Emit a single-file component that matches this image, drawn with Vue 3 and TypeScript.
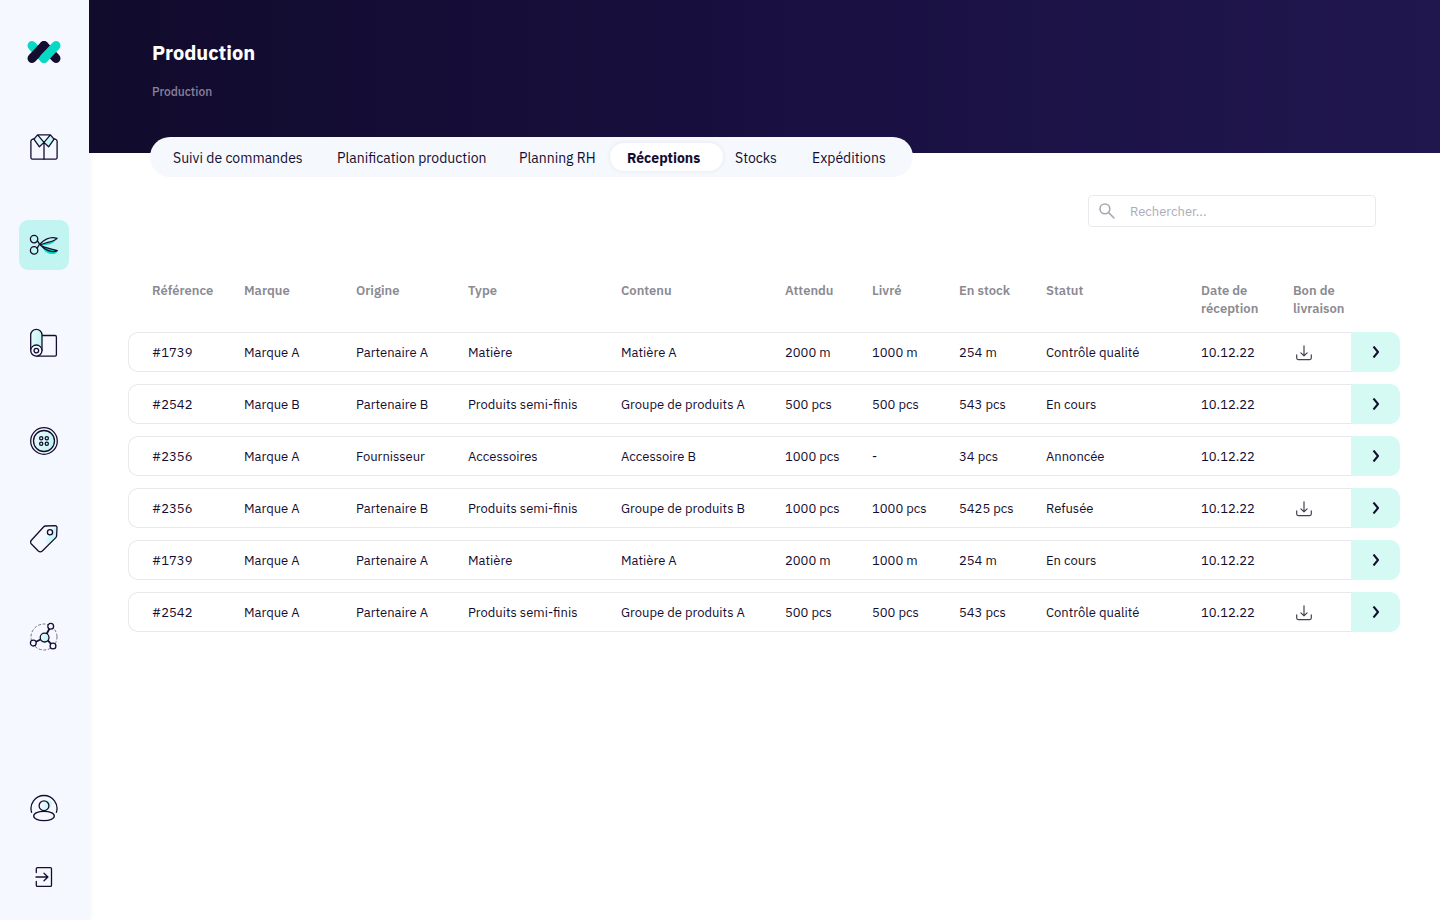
<script setup lang="ts">
import { ref } from 'vue'

interface Reception {
  reference: string
  brand: string
  origin: string
  type: string
  content: string
  expected: string
  delivered: string
  stock: string
  status: string
  date: string
  note: boolean
}

const navItems = [
  { id: 'products', label: 'Produits' },
  { id: 'production', label: 'Production' },
  { id: 'materials', label: 'Matières' },
  { id: 'supplies', label: 'Accessoires' },
  { id: 'labels', label: 'Étiquettes' },
  { id: 'network', label: 'Partenaires' },
]

const tabs = ['Suivi de commandes', 'Planification production', 'Planning RH', 'Réceptions', 'Stocks', 'Expéditions']
const activeTab = ref('Réceptions')
const search = ref('')

const columns = [
  'Référence', 'Marque', 'Origine', 'Type', 'Contenu', 'Attendu',
  'Livré', 'En stock', 'Statut', 'Date de réception', 'Bon de livraison',
]

const rows: Reception[] = [
  { reference: '#1739', brand: 'Marque A', origin: 'Partenaire A', type: 'Matière', content: 'Matière A', expected: '2000 m', delivered: '1000 m', stock: '254 m', status: 'Contrôle qualité', date: '10.12.22', note: true },
  { reference: '#2542', brand: 'Marque B', origin: 'Partenaire B', type: 'Produits semi-finis', content: 'Groupe de produits A', expected: '500 pcs', delivered: '500 pcs', stock: '543 pcs', status: 'En cours', date: '10.12.22', note: false },
  { reference: '#2356', brand: 'Marque A', origin: 'Fournisseur', type: 'Accessoires', content: 'Accessoire B', expected: '1000 pcs', delivered: '-', stock: '34 pcs', status: 'Annoncée', date: '10.12.22', note: false },
  { reference: '#2356', brand: 'Marque A', origin: 'Partenaire B', type: 'Produits semi-finis', content: 'Groupe de produits B', expected: '1000 pcs', delivered: '1000 pcs', stock: '5425 pcs', status: 'Refusée', date: '10.12.22', note: true },
  { reference: '#1739', brand: 'Marque A', origin: 'Partenaire A', type: 'Matière', content: 'Matière A', expected: '2000 m', delivered: '1000 m', stock: '254 m', status: 'En cours', date: '10.12.22', note: false },
  { reference: '#2542', brand: 'Marque A', origin: 'Partenaire A', type: 'Produits semi-finis', content: 'Groupe de produits A', expected: '500 pcs', delivered: '500 pcs', stock: '543 pcs', status: 'Contrôle qualité', date: '10.12.22', note: true },
]
</script>

<template>
  <div class="app">
    <aside class="sidebar">
      <a href="#" class="logo" aria-label="Accueil">
        <svg width="34" height="22" viewBox="0 0 34 22" fill="none" stroke-width="9" stroke-linecap="round">
          <defs>
            <linearGradient id="tint-fade" x1="0" y1="0" x2="1" y2="0.3">
              <stop offset="0" stop-color="#eefafe" />
              <stop offset="1" stop-color="#bff6f3" />
            </linearGradient>
          </defs>
          <path d="M5 4.6 17 17.4" stroke="#08d9c5" />
          <path d="M17 4.6 29 17.4" stroke="#140d30" />
          <path d="M5 17.4 17 4.6" stroke="#140d30" />
          <path d="M17 17.4 29 4.6" stroke="#08d9c5" />
        </svg>
      </a>

      <nav class="nav" aria-label="Navigation principale">
        <a
          v-for="item in navItems"
          :key="item.id"
          href="#"
          class="nav-item"
          :class="{ current: item.id === 'production' }"
          :aria-label="item.label"
        >
          <svg class="icon" viewBox="0 0 30 30">
            <template v-if="item.id === 'products'">
              <path class="tint" stroke="none" d="M8.5 3 4.8 7.2l5.5 7.6 4.7-4.6 4.7 4.6 5.5-7.6L21.5 3l-6.5 7Z" />
              <path d="M5.6 6.600 3.200 7.400Q1.900 7.800 1.900 9.300v16.200q0 1.600 1.600 1.600h23q1.600 0 1.600-1.600V9.300q0-1.500-1.300-1.900l-2.400-.8" />
              <path d="M8.600 2.900h12.800M15 10.400v16.700M8.600 2.900 4.900 7.200l5.500 7.600 4.600-4.400ZM21.400 2.900l3.700 4.300-5.500 7.600-4.600-4.400Z" />
            </template>
            <template v-else-if="item.id === 'production'">
              <path class="accent" d="M13 16.200c4 1.500 10.500 2.500 15.300 5.300-1.500 4-9.500 3-12.600-.5Z" />
              <path class="accent" d="M12.500 15.200c5-2.700 10-2.200 14-5.200-3 5-9 5.200-14 5.200Z" />
              <circle cx="5.100" cy="9.100" r="3.700" />
              <circle cx="5.100" cy="20.400" r="3.700" />
              <path d="M8.300 10.800c1.200 1.200 1.500 2.800 3.100 4.200 4.600 3.400 11.100 3.500 16.900 5.700-5.500 2.600-12.800-1-16.900-5.700M8 18.200c1.300-1.200 1-3 3.300-4.500C15 10 21 6.200 28.100 8.300c-2.800 3.500-11.600 4-16.700 6.700" />
            </template>
            <template v-else-if="item.id === 'materials'">
              <path class="tint" d="M1.700 22.700V7a5.650 5.650 0 0 1 11.300 0v15.700Z" stroke="none" />
              <path d="M1.700 22.700V7a5.650 5.650 0 0 1 11.300 0v15.700M13 7.500h13q1.400 0 1.400 1.400v17.800q0 1.400-1.400 1.400H7.500" />
              <circle cx="7.350" cy="22.600" r="5.600" class="base" />
              <circle cx="7.350" cy="22.600" r="2.300" />
            </template>
            <template v-else-if="item.id === 'supplies'">
              <circle cx="15" cy="15" r="13.300" />
              <circle cx="15" cy="15" r="10.500" class="tint" />
              <circle cx="12.200" cy="12.300" r="1.600" />
              <circle cx="17.800" cy="12.300" r="1.600" />
              <circle cx="12.200" cy="17.700" r="1.600" />
              <circle cx="17.800" cy="17.700" r="1.600" />
            </template>
            <template v-else-if="item.id === 'labels'">
              <path class="tint" stroke="none" d="m27 2-11 14 2 5 9-8Z" />
              <path d="M16.500 2 26 1.600q2 0 2 1.900l-.400 8.300q0 1-.8 1.800L13.300 27q-2 1.700-4 0L2.400 20q-1.600-1.900 0-3.700L14.500 3q.9-.9 2-1Z" />
              <circle cx="21" cy="8.200" r="2.600" />
            </template>
            <template v-else>
              <circle cx="15" cy="15" r="13" stroke-width="0.800" stroke-opacity="0.700" stroke-dasharray="2.200 2.400" />
              <path d="m17.700 11.800 2.600-4.800M11.600 17.500 7 19.800M19 18.600l3 3.200" stroke-width="1.800" />
              <circle cx="15.600" cy="15.600" r="4.400" class="tint" />
              <circle cx="21.700" cy="4.300" r="2.900" class="base" />
              <circle cx="4.300" cy="21.100" r="2.900" class="base" />
              <circle cx="24" cy="24" r="2.900" class="base" />
            </template>
          </svg>
        </a>
      </nav>

      <div class="account">
        <a href="#" class="nav-item" aria-label="Mon compte">
          <svg class="icon" viewBox="0 0 30 30">
            <path class="tint" stroke="none" d="M13 17q9 3 10-8-6-4-10 0Z" />
            <path d="M2.600 19.400a13 13 0 1 1 24.800 0" />
            <circle cx="15" cy="12.700" r="4.900" />
            <ellipse cx="15" cy="23" rx="10.300" ry="4.700" />
          </svg>
        </a>
        <button type="button" class="nav-item" aria-label="Se déconnecter">
          <svg class="icon" viewBox="0 0 30 30">
            <path d="M7.300 10.500V6.800Q7.300 5.600 8.500 5.600h12.800q1.200 0 1.200 1.200v16.400q0 1.200-1.200 1.200H8.500q-1.200 0-1.200-1.200v-3.700M7 15h12M15 11.200 18.900 15 15 18.800" />
          </svg>
        </button>
      </div>
    </aside>

    <div class="page">
      <header class="banner">
        <h1>Production</h1>
        <p>Production</p>
      </header>

      <nav class="tabs" aria-label="Sections de production">
        <button
          v-for="tab in tabs"
          :key="tab"
          type="button"
          class="tab"
          :class="{ active: tab === activeTab }"
          @click="activeTab = tab"
        >{{ tab }}</button>
      </nav>

      <main class="content">
        <label class="search">
          <svg width="16" height="16" viewBox="0 0 16 16" fill="none" stroke="#a9a9b5" stroke-width="1.600" stroke-linecap="round">
            <circle cx="5.900" cy="5.900" r="4.900" />
            <path d="m9.600 9.600 5.400 5.400" />
          </svg>
          <input v-model="search" type="search" placeholder="Rechercher..." aria-label="Rechercher" />
        </label>

        <table class="receptions">
          <colgroup>
            <col class="w-reference" /><col class="w-name" /><col class="w-name" /><col class="w-type" />
            <col class="w-content" /><col class="w-amount" /><col class="w-amount" /><col class="w-amount" />
            <col class="w-status" /><col class="w-date" /><col class="w-note" /><col class="w-action" />
          </colgroup>
          <thead>
            <tr>
              <th v-for="column in columns" :key="column" scope="col">{{ column }}</th>
              <td></td>
            </tr>
          </thead>
          <tbody>
            <tr v-for="(row, index) in rows" :key="index">
              <td>{{ row.reference }}</td>
              <td>{{ row.brand }}</td>
              <td>{{ row.origin }}</td>
              <td>{{ row.type }}</td>
              <td>{{ row.content }}</td>
              <td>{{ row.expected }}</td>
              <td>{{ row.delivered }}</td>
              <td>{{ row.stock }}</td>
              <td>{{ row.status }}</td>
              <td>{{ row.date }}</td>
              <td>
                <button v-if="row.note" type="button" class="download" aria-label="Télécharger le bon de livraison">
                  <svg width="16" height="16" viewBox="0 0 16 16" fill="none" stroke="#44424f" stroke-width="1.200" stroke-linecap="round" stroke-linejoin="round">
                    <path d="M8 .8v10M4.900 7.800 8 10.900l3.100-3.100M.7 9.800v3.300q0 1.500 1.500 1.500h11.600q1.500 0 1.500-1.500V9.800" />
                  </svg>
                </button>
              </td>
              <td class="action">
                <button type="button" class="open" :aria-label="'Ouvrir ' + row.reference">
                  <svg width="8" height="12" viewBox="0 0 8 12" fill="none" stroke="#140d30" stroke-width="2" stroke-linejoin="round">
                    <path d="M1.500 .5 6 6l-4.500 5.500" />
                  </svg>
                </button>
              </td>
            </tr>
          </tbody>
        </table>
      </main>
    </div>
  </div>
</template>

<style>
body {
  margin: 0;
  background: #fff;
}
</style>

<style scoped>
.app {
  display: flex;
  min-height: 100vh;
  font-family: "IBM Plex Sans", Roboto, "Liberation Sans", sans-serif;
  font-size: 13px;
  color: #140d30;
}

button {
  box-sizing: border-box;
  font: inherit;
  color: inherit;
  border: 0;
  padding: 0;
  background: none;
  cursor: pointer;
}

.sidebar {
  flex: none;
  box-sizing: border-box;
  width: 89px;
  padding: 41px 1px 18px 0;
  display: flex;
  flex-direction: column;
  align-items: center;
  background: #f5f9ff;
  box-shadow: 0 0 6px rgba(20, 13, 48, 0.08);
}

.logo {
  display: flex;
  height: 22px;
}

.nav {
  display: flex;
  flex-direction: column;
  gap: 48px;
  margin-top: 59px;
}

.nav-item {
  display: flex;
  align-items: center;
  justify-content: center;
  width: 50px;
  height: 50px;
  border-radius: 9px;
}

.nav-item.current {
  background: #c2f5f1;
}

.icon {
  width: 30px;
  height: 30px;
  fill: none;
  stroke: #140d30;
  stroke-width: 1.3;
  stroke-linecap: round;
  stroke-linejoin: round;
}

.icon .tint {
  fill: url(#tint-fade);
}

.icon .base {
  fill: #f5f9ff;
}

.icon .accent {
  fill: #08d9c5;
  stroke: none;
}

.account {
  display: flex;
  flex-direction: column;
  gap: 19px;
  margin-top: auto;
}

.page {
  flex: 1;
  min-width: 0;
}

.banner {
  box-sizing: border-box;
  height: 153px;
  padding: 40px 63px 0;
  background: linear-gradient(90deg, #110b2c 0%, #190f40 50%, #20174f 100%);
}

.banner h1 {
  margin: 0;
  font-size: 20px;
  line-height: 26px;
  font-weight: 700;
  color: #fff;
}

.banner p {
  margin: 17px 0 0;
  font-size: 12px;
  line-height: 18px;
  font-weight: 500;
  color: #88839b;
}

.tabs {
  position: relative;
  display: grid;
  grid-template-columns: 164px 182px 108px 108px 77px 118px;
  align-items: center;
  width: max-content;
  height: 40px;
  margin: -16px 0 0 61px;
  padding-left: 6px;
  border-radius: 20px;
  background: #f5f9fe;
}

.tab {
  height: 28px;
  padding: 2px 17px 0;
  border-radius: 14px;
  font-size: 14px;
  line-height: 26px;
  text-align: left;
  white-space: nowrap;
}

.tab.active {
  margin-right: -5px;
  background: #fff;
  font-weight: 700;
  box-shadow: 0 0 5px rgba(20, 13, 48, 0.08);
}

.content {
  padding: 18px 40px 40px 39px;
}

.search {
  box-sizing: border-box;
  display: flex;
  align-items: center;
  gap: 15px;
  width: 288px;
  height: 32px;
  margin: 0 24px 0 auto;
  padding: 0 10px;
  border: 1px solid #e9e9ed;
  border-radius: 4px;
}

.search svg {
  flex: none;
}

.search input {
  flex: 1;
  min-width: 0;
  padding: 0;
  border: 0;
  outline: 0;
  background: none;
  font: inherit;
  color: inherit;
}

.search input::placeholder {
  color: #acacb9;
  opacity: 1;
}

.receptions {
  width: 100%;
  margin-top: 42px;
  table-layout: fixed;
  border-collapse: separate;
  border-spacing: 0 12px;
  line-height: 18px;
}

.w-reference { width: 116px; }
.w-name { width: 112px; }
.w-type { width: 153px; }
.w-content { width: 164px; }
.w-amount { width: 87px; }
.w-status { width: 155px; }
.w-date { width: 92px; }
.w-note { width: 58px; }
.w-action { width: 49px; }

th {
  padding: 1px 0 2px;
  vertical-align: top;
  text-align: left;
  font-weight: 600;
  color: #8b8a92;
}

th:nth-child(10) {
  padding-right: 24px;
}

tbody td {
  box-sizing: border-box;
  height: 40px;
  padding: 2px 0 0;
  border: 1px solid #e9e9ed;
  border-width: 1px 0;
  white-space: nowrap;
}

th:first-child {
  padding-left: 24px;
}

tbody td:first-child {
  padding-left: 23px;
  border-left-width: 1px;
  border-radius: 10px 0 0 10px;
}

tbody td.action {
  padding: 0;
  border-color: #d5faf4;
  border-radius: 0 10px 10px 0;
  background: #d5faf4;
}

.download {
  display: flex;
  margin-left: 3px;
}

.open {
  display: flex;
  align-items: center;
  justify-content: center;
  width: 100%;
  height: 38px;
}
</style>
